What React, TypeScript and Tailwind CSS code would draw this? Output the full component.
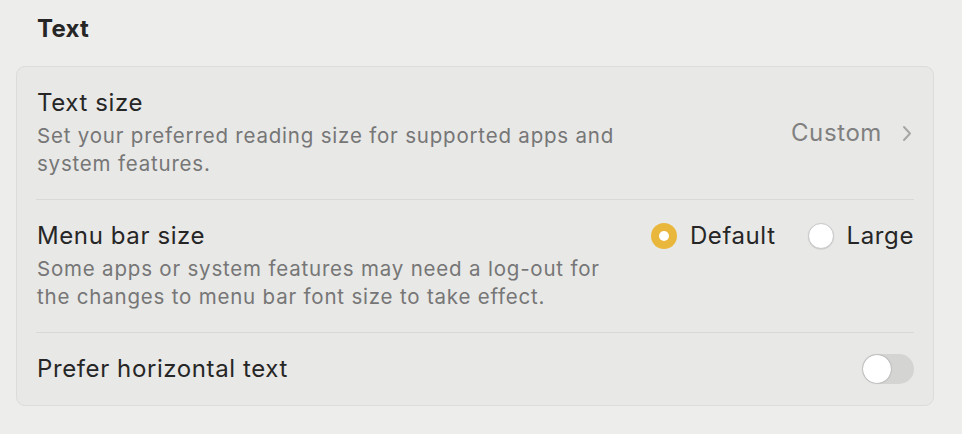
const font = { fontFamily: "Inter, 'Noto Sans', sans-serif" };

function Radio({ checked, label }: { checked: boolean; label: string }) {
  return (
    <div className="flex items-center gap-[13px]">
      {checked ? (
        <span className="flex h-[26px] w-[26px] items-center justify-center rounded-full bg-[#e9b73c]">
          <span className="h-[10px] w-[10px] rounded-full bg-white" />
        </span>
      ) : (
        <span className="h-[26px] w-[26px] rounded-full border border-[#c9c9c9] bg-white shadow-[0_0.5px_1px_rgba(0,0,0,0.15)]" />
      )}
      <span className="text-[24px] leading-[30px] tracking-[0.6px] text-[#262626]">{label}</span>
    </div>
  );
}

export default function App() {
  return (
    <div className="min-h-[434px] w-[962px] bg-[#ededec] pl-[16px] pr-[28px] pt-[14px]" style={font}>
      <h2 className="pl-[21px] text-[24px] font-bold leading-[30px] tracking-[0.3px] text-[#262626]">Text</h2>
      <div className="mt-[22px] rounded-[9px] border border-[#dcdcdb] bg-[#e8e8e7]">
        <div className="mx-[19px] flex items-center justify-between border-b border-[#d9d9d8] py-[21px] pl-[1px]">
          <div>
            <div className="text-[24px] leading-[30px] tracking-[0.6px] text-[#262626]">Text size</div>
            <div className="mt-[4px] w-[588px] text-[20.5px] leading-[28px] tracking-[0.8px] text-[#767676]">
              Set your preferred reading size for supported apps and system features.
            </div>
          </div>
          <div className="flex items-center gap-[20px] pr-[2px]">
            <span className="text-[24px] tracking-[0.6px] text-[#808080]">Custom</span>
            <svg width="10" height="17" viewBox="0 0 10 17" fill="none">
              <path d="M2 2l6 6.5L2 15" stroke="#a6a6a6" strokeWidth="2" strokeLinecap="round" strokeLinejoin="round" />
            </svg>
          </div>
        </div>
        <div className="mx-[19px] flex items-start justify-between border-b border-[#d9d9d8] py-[21px] pl-[1px]">
          <div>
            <div className="text-[24px] leading-[30px] tracking-[0.6px] text-[#262626]">Menu bar size</div>
            <div className="mt-[4px] w-[588px] text-[20.5px] leading-[28px] tracking-[0.8px] text-[#767676]">
              Some apps or system features may need a log-out for the changes to menu bar font size to take effect.
            </div>
          </div>
          <div className="flex items-center gap-[32px]">
            <Radio checked label="Default" />
            <Radio checked={false} label="Large" />
          </div>
        </div>
        <div className="mx-[19px] flex items-center justify-between py-[21px] pl-[1px]">
          <div className="text-[24px] leading-[30px] tracking-[0.6px] text-[#262626]">Prefer horizontal text</div>
          <div className="flex h-[30px] w-[52px] items-center rounded-full bg-[#d4d4d3] px-[1px]">
            <span className="h-[28px] w-[28px] rounded-full bg-white shadow-[0_0_1.5px_rgba(0,0,0,0.45)]" />
          </div>
        </div>
      </div>
    </div>
  );
}
